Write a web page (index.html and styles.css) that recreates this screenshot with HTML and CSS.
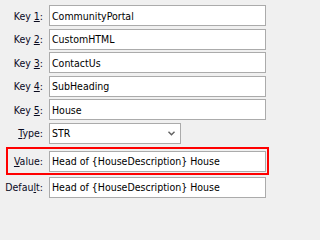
FILE: index.html
```
<!DOCTYPE html>
<html>
<head>
<meta charset="utf-8">
<link rel="stylesheet" href="styles.css">
</head>
<body>
<div class="form">
  <div class="row"><label class="lbl">Key <u>1</u>:</label><div class="field">CommunityPortal</div></div>
  <div class="row"><label class="lbl">Key <u>2</u>:</label><div class="field">CustomHTML</div></div>
  <div class="row"><label class="lbl">Key <u>3</u>:</label><div class="field">ContactUs</div></div>
  <div class="row"><label class="lbl">Key <u>4</u>:</label><div class="field">SubHeading</div></div>
  <div class="row"><label class="lbl">Key <u>5</u>:</label><div class="field">House</div></div>
  <div class="row"><label class="lbl"><u>T</u>ype:</label><div class="select"><span>STR</span><svg class="chev" width="7" height="5" viewBox="0 0 7 5"><path d="M0.5 0.8 L3.5 3.8 L6.5 0.8" fill="none" stroke="#606060" stroke-width="1.4"/></svg></div></div>
  <div class="row highlight"><label class="lbl"><u>V</u>alue:</label><div class="field">Head of {HouseDescription} House</div></div>
  <div class="row last"><label class="lbl">Defau<u>l</u>t:</label><div class="field">Head of {HouseDescription} House</div></div>
</div>
</body>
</html>
```
FILE: styles.css
```
html, body {
  margin: 0;
  padding: 0;
  background: #f0f0f0;
  width: 271px;
  height: 202px;
  overflow: hidden;
}
.form {
  padding-top: 5px;
  font-family: "DejaVu Sans Condensed", "DejaVu Sans", sans-serif;
  font-size: 10.5px;
  color: #000;
  display: flex;
  flex-direction: column;
  gap: 2.5px;
}
.row {
  display: flex;
  align-items: center;
  width: 266px;
  height: 21px;
}
.lbl {
  width: 49px;
  padding-right: 6px;
  box-sizing: border-box;
  text-align: right;
  white-space: nowrap;
  color: #0a0a1e;
}
.field, .select {
  box-sizing: border-box;
  height: 21px;
  border: 1px solid #ababab;
  background: #fff;
  padding-left: 2px;
  display: flex;
  align-items: center;
  white-space: nowrap;
  overflow: hidden;
}
.field {
  width: 217px;
}
.select {
  width: 132px;
  justify-content: space-between;
  padding-right: 5px;
}
.chev {
  display: block;
}
.highlight {
  width: auto;
  height: 21px;
  margin: 1px 2px 0 6px;
  border: 2px solid #ff0000;
  padding: 1.5px 1px 1px 0;
}
.highlight .lbl {
  width: 41px;
}
.last {
  margin-top: -0.5px;
}
```
